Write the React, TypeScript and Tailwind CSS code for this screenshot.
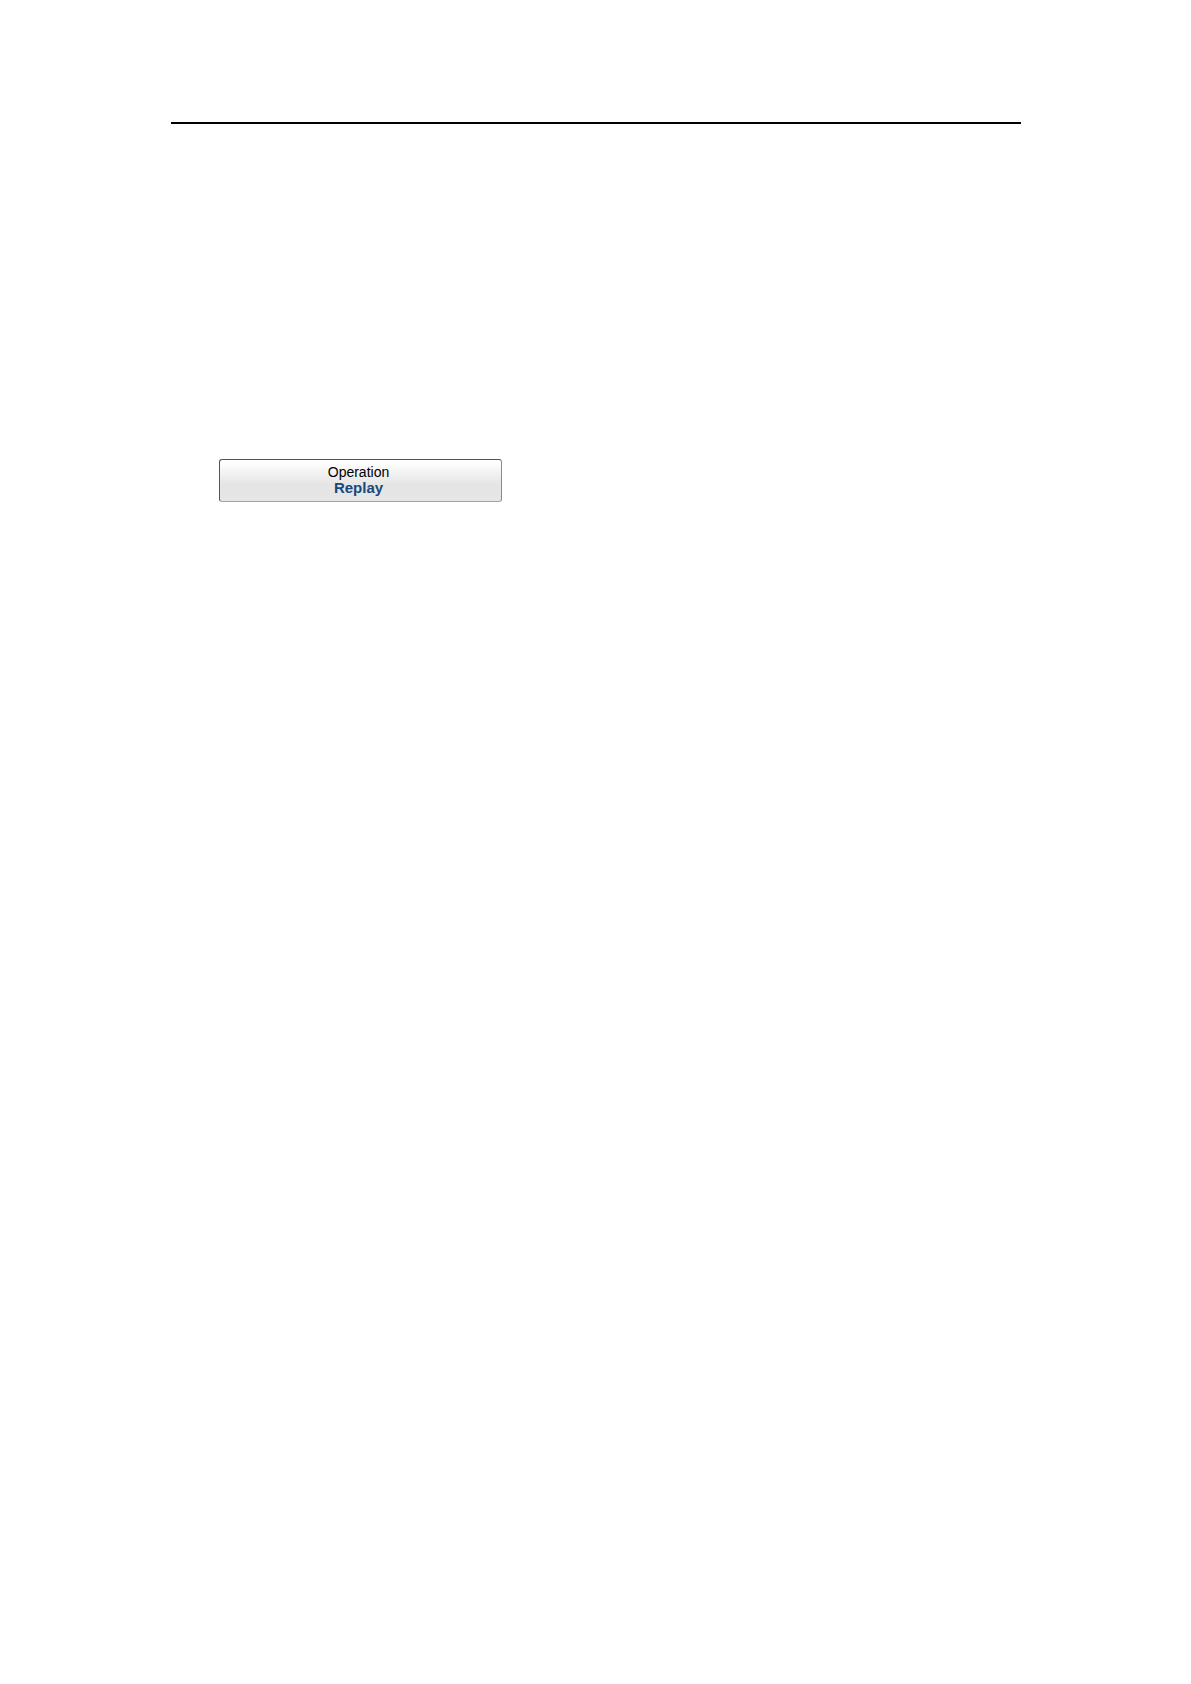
export default function App() {
  return (
    <main className="min-h-screen bg-white px-[171px] pr-[170px] pt-[122px] font-['Liberation_Sans',Arial,sans-serif]">
      <hr className="border-0 h-[2px] bg-black" />
      <section className="pt-[335px] pl-12">
        <button
          type="button"
          className="flex h-[43px] w-[283px] flex-col items-center rounded-[3px] border border-t-[#555] border-r-[#8a8a8a] border-b-[#a3a3a3] border-l-[#555] bg-linear-to-b from-white from-5% via-[#e5e5e5] via-60% to-[#e6e6e6] pt-1 pr-1"
        >
          <span className="text-[14px] leading-4 text-black">Operation</span>
          <span className="text-[15px] leading-4 font-bold text-[#174a7c]">Replay</span>
        </button>
      </section>
    </main>
  );
}
